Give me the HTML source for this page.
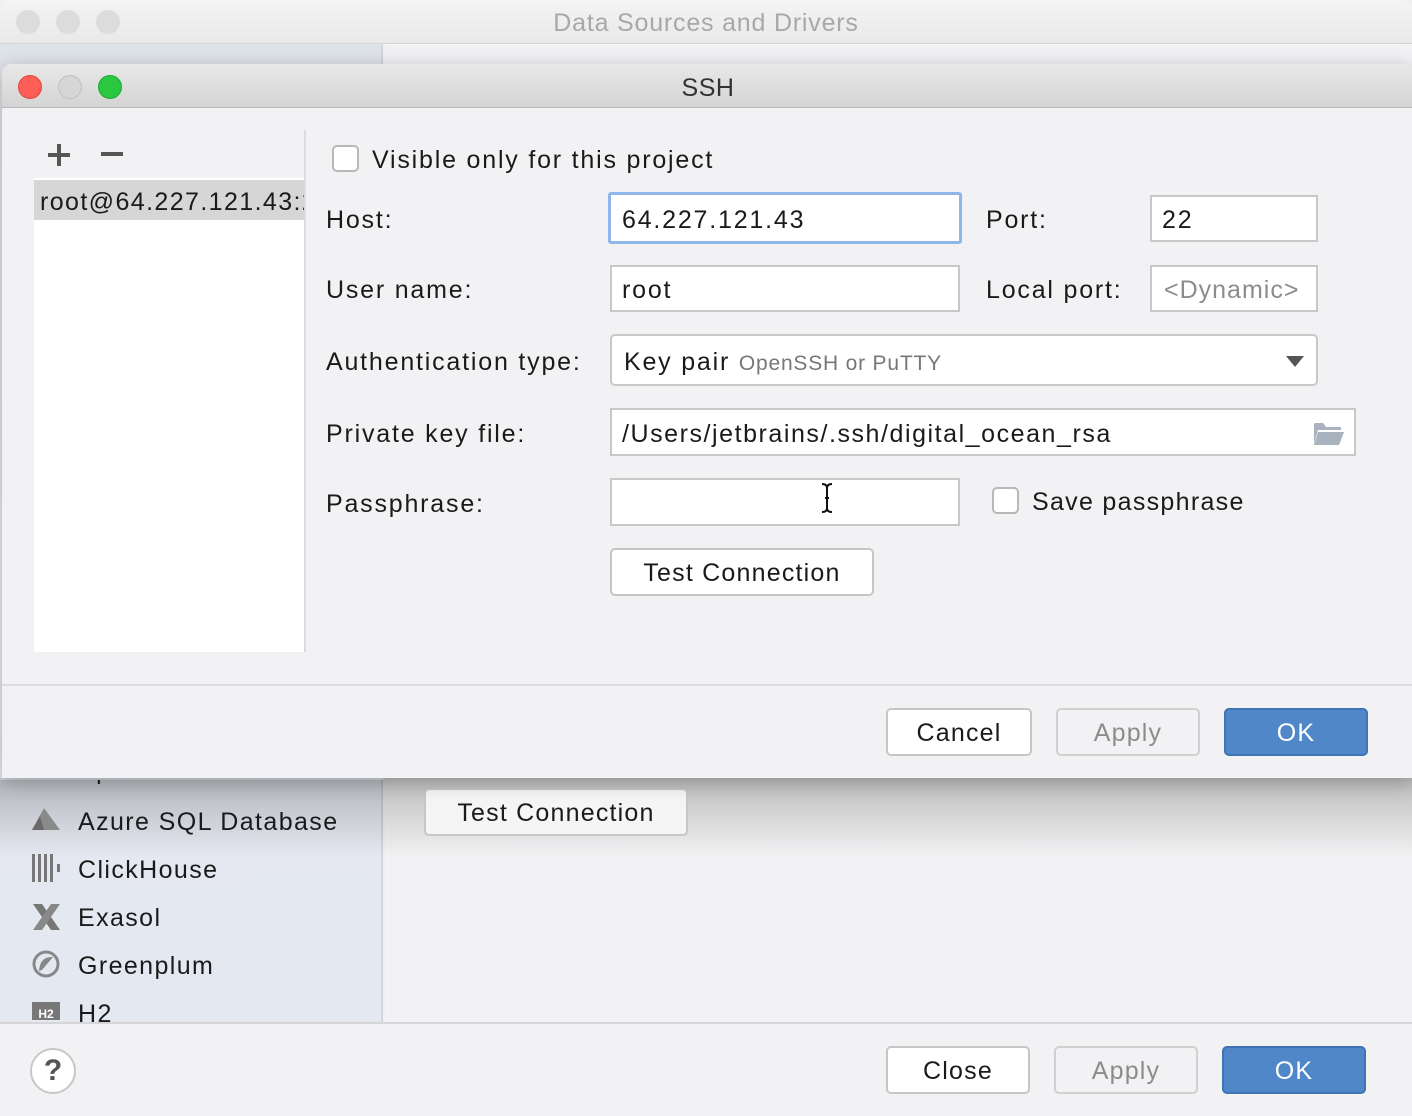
<!DOCTYPE html>
<html><head><meta charset="utf-8"><style>
*{box-sizing:border-box;margin:0;padding:0}
body{width:1412px;height:1116px;overflow:hidden;background:#efeff1;font-family:"Liberation Sans",sans-serif;color:#1a1a1a;position:relative}
.a{position:absolute}
.t{position:absolute;font-size:25px;line-height:30px;white-space:nowrap;letter-spacing:1.8px}
.s{letter-spacing:1.4px}
.fld{position:absolute;background:#fff;border:2px solid #c8c8c8}
.btn{position:absolute;background:#fff;border:2px solid #c6c6c6;border-radius:5px;font-size:25px;text-align:center;letter-spacing:1.2px}
.dis{background:#f2f2f4;color:#8c8c8c;border-color:#d0d0d0}
.ok{background:#4f87c8;border-color:#3e74b6;color:#fff}
.dot{position:absolute;width:24px;height:24px;border-radius:50%}
.cb{position:absolute;width:27px;height:27px;background:#fff;border:2px solid #b8b8b8;border-radius:5px}
</style></head><body>
<div class="a" style="left:0;top:0;width:1412px;height:44px;background:linear-gradient(#f4f4f4,#e9e9e9);border-bottom:1px solid #d4d4d4;border-radius:10px 10px 0 0"></div>
<div class="dot" style="left:16px;top:10px;background:#dcdcdc"></div>
<div class="dot" style="left:56px;top:10px;background:#dcdcdc"></div>
<div class="dot" style="left:96px;top:10px;background:#dcdcdc"></div>
<div class="t" style="left:0;width:1412px;top:8px;text-align:center;color:#a8a8a8;letter-spacing:0.8px">Data Sources and Drivers</div>
<div class="a" style="left:0;top:44px;width:383px;height:978px;background:linear-gradient(#dfe3ea,#e6e9f1 50%,#e4e8f0);border-right:2px solid #d4d6da"></div>
<div class="a" style="left:385px;top:44px;width:1027px;height:978px;background:#f2f2f4"></div>
<div class="a" style="left:0;top:778px;width:1412px;height:80px;background:linear-gradient(rgba(0,0,0,0.22),rgba(0,0,0,0))"></div>
<div class="t s" style="left:78px;top:756px;color:#222">Apache Hive</div>
<div class="a" style="left:0;top:778px;width:383px;height:2px;background:#cfd2d8"></div>
<div class="t s" style="left:78px;top:807px">Azure SQL Database</div>
<div class="t s" style="left:78px;top:855px">ClickHouse</div>
<div class="t s" style="left:78px;top:903px">Exasol</div>
<div class="t s" style="left:78px;top:951px">Greenplum</div>
<div class="t s" style="left:78px;top:999px">H2</div>
<svg class="a" style="left:30px;top:806px" width="32" height="220" viewBox="0 0 32 220">
<path d="M2 24 L14 2 L30 24 L18 24 Z" fill="#8a8a8a"/><path d="M2 24 L10 10 L14 24Z" fill="#6a6a6a"/>
<g fill="#777"><rect x="2" y="48" width="3" height="28"/><rect x="8" y="48" width="3" height="28"/><rect x="14" y="48" width="3" height="28"/><rect x="20" y="48" width="3" height="28"/><rect x="27" y="58" width="3" height="8"/></g>
<path d="M3 98 L12 98 L30 124 L21 124 Z" fill="#777"/><path d="M30 98 L21 98 L3 124 L12 124 Z" fill="#888"/>
<circle cx="16" cy="158" r="12" fill="none" stroke="#888" stroke-width="3"/><path d="M9 165 Q10 150 23 151 L12 164Z" fill="#888"/>
<rect x="2" y="196" width="28" height="18" fill="#777"/><text x="16" y="212" font-size="12" font-weight="bold" fill="#fff" text-anchor="middle" font-family="Liberation Sans">H2</text>
</svg>
<div class="a" style="left:0;top:1022px;width:1412px;height:94px;background:#f2f2f4;border-top:2px solid #d6d6d8"></div>
<div class="a" style="left:30px;top:1048px;width:46px;height:46px;border-radius:50%;background:#fff;border:2px solid #c8c8c8;font-size:30px;font-weight:bold;color:#555;text-align:center;line-height:42px">?</div>
<div class="btn" style="left:886px;top:1046px;width:144px;height:48px;line-height:46px">Close</div>
<div class="btn dis" style="left:1054px;top:1046px;width:144px;height:48px;line-height:46px">Apply</div>
<div class="btn ok" style="left:1222px;top:1046px;width:144px;height:48px;line-height:46px">OK</div>
<div class="btn" style="left:424px;top:788px;width:264px;height:48px;line-height:46px;background:#f5f5f6">Test Connection</div>

<div class="a" style="left:2px;top:64px;width:1412px;height:714px;background:#f2f2f4;border-radius:10px 10px 0 0;box-shadow:0 4px 20px rgba(0,0,0,0.25)"></div>
<div class="a" style="left:2px;top:64px;width:1412px;height:44px;background:linear-gradient(#e8e8e8,#d4d4d4);border-bottom:1px solid #b8b8b8;border-radius:10px 10px 0 0"></div>
<div class="dot" style="left:18px;top:75px;background:#fd5f57;border:1px solid #e0443e"></div>
<div class="dot" style="left:58px;top:75px;background:#d6d6d6;border:1px solid #c0c0c0"></div>
<div class="dot" style="left:98px;top:75px;background:#2ac840;border:1px solid #1ea832"></div>
<div class="t" style="left:2px;width:1412px;top:73px;text-align:center;color:#333;letter-spacing:0.5px">SSH</div>

<div class="a" style="left:48px;top:144px;width:22px;height:22px"><div class="a" style="left:0;top:9px;width:22px;height:4px;background:#555"></div><div class="a" style="left:9px;top:0;width:4px;height:22px;background:#555"></div></div>
<div class="a" style="left:101px;top:152px;width:22px;height:4px;background:#555"></div>
<div class="a" style="left:34px;top:178px;width:270px;height:474px;background:#fff"></div>
<div class="a" style="left:34px;top:180px;width:270px;height:40px;background:#d6d6d6"></div>
<div class="t" style="left:40px;top:187px;width:264px;overflow:hidden;letter-spacing:1.4px">root@64.227.121.43:22</div>
<div class="a" style="left:304px;top:130px;width:2px;height:522px;background:#dcdcdc"></div>

<div class="cb" style="left:332px;top:145px"></div>
<div class="t" style="left:372px;top:145px">Visible only for this project</div>
<div class="t" style="left:326px;top:205px">Host:</div>
<div class="fld" style="left:608px;top:192px;width:354px;height:52px;border:3px solid #8fb6ea;border-radius:3px"></div>
<div class="t" style="left:622px;top:205px">64.227.121.43</div>
<div class="t" style="left:986px;top:205px">Port:</div>
<div class="fld" style="left:1150px;top:195px;width:168px;height:47px"></div>
<div class="t" style="left:1162px;top:205px">22</div>

<div class="t" style="left:326px;top:275px">User name:</div>
<div class="fld" style="left:610px;top:265px;width:350px;height:47px"></div>
<div class="t" style="left:622px;top:275px">root</div>
<div class="t" style="left:986px;top:275px">Local port:</div>
<div class="fld" style="left:1150px;top:265px;width:168px;height:47px"></div>
<div class="t" style="left:1164px;top:275px;color:#8c8c8c;letter-spacing:1px">&lt;Dynamic&gt;</div>

<div class="t" style="left:326px;top:347px">Authentication type:</div>
<div class="fld" style="left:610px;top:334px;width:708px;height:52px;border-radius:5px"></div>
<div class="t" style="left:624px;top:347px">Key pair <span style="font-size:21px;color:#777;letter-spacing:0.8px">OpenSSH or PuTTY</span></div>
<svg class="a" style="left:1284px;top:354px" width="22" height="14"><path d="M2 2 L20 2 L11 13Z" fill="#555"/></svg>

<div class="t" style="left:326px;top:419px">Private key file:</div>
<div class="fld" style="left:610px;top:408px;width:746px;height:48px"></div>
<div class="t" style="left:622px;top:419px;letter-spacing:1.55px">/Users/jetbrains/.ssh/digital_ocean_rsa</div>
<svg class="a" style="left:1313px;top:420px" width="32" height="26"><path d="M1 4 L1 24 L5 10 L28 10 L28 7 L13 7 L10 3 L2 3Z" fill="#a9b3bf"/><path d="M5 12 L31 12 L26 25 L1 25Z" fill="#a9b3bf"/></svg>

<div class="t" style="left:326px;top:489px">Passphrase:</div>
<div class="fld" style="left:610px;top:478px;width:350px;height:48px"></div>
<svg class="a" style="left:818px;top:482px" width="18" height="32"><path d="M4 2 Q9 2 9 6 Q9 2 14 2 M9 6 L9 26 M4 30 Q9 30 9 26 Q9 30 14 30 M7 16 L11 16" stroke="#111" stroke-width="2" fill="none"/></svg>
<div class="cb" style="left:992px;top:487px"></div>
<div class="t" style="left:1032px;top:487px;letter-spacing:1.3px">Save passphrase</div>

<div class="btn" style="left:610px;top:548px;width:264px;height:48px;line-height:46px;font-size:25px">Test Connection</div>

<div class="a" style="left:2px;top:684px;width:1410px;height:2px;background:#dcdcde"></div>
<div class="btn" style="left:886px;top:708px;width:146px;height:48px;line-height:46px">Cancel</div>
<div class="btn dis" style="left:1056px;top:708px;width:144px;height:48px;line-height:46px">Apply</div>
<div class="btn ok" style="left:1224px;top:708px;width:144px;height:48px;line-height:46px">OK</div>
</body></html>
